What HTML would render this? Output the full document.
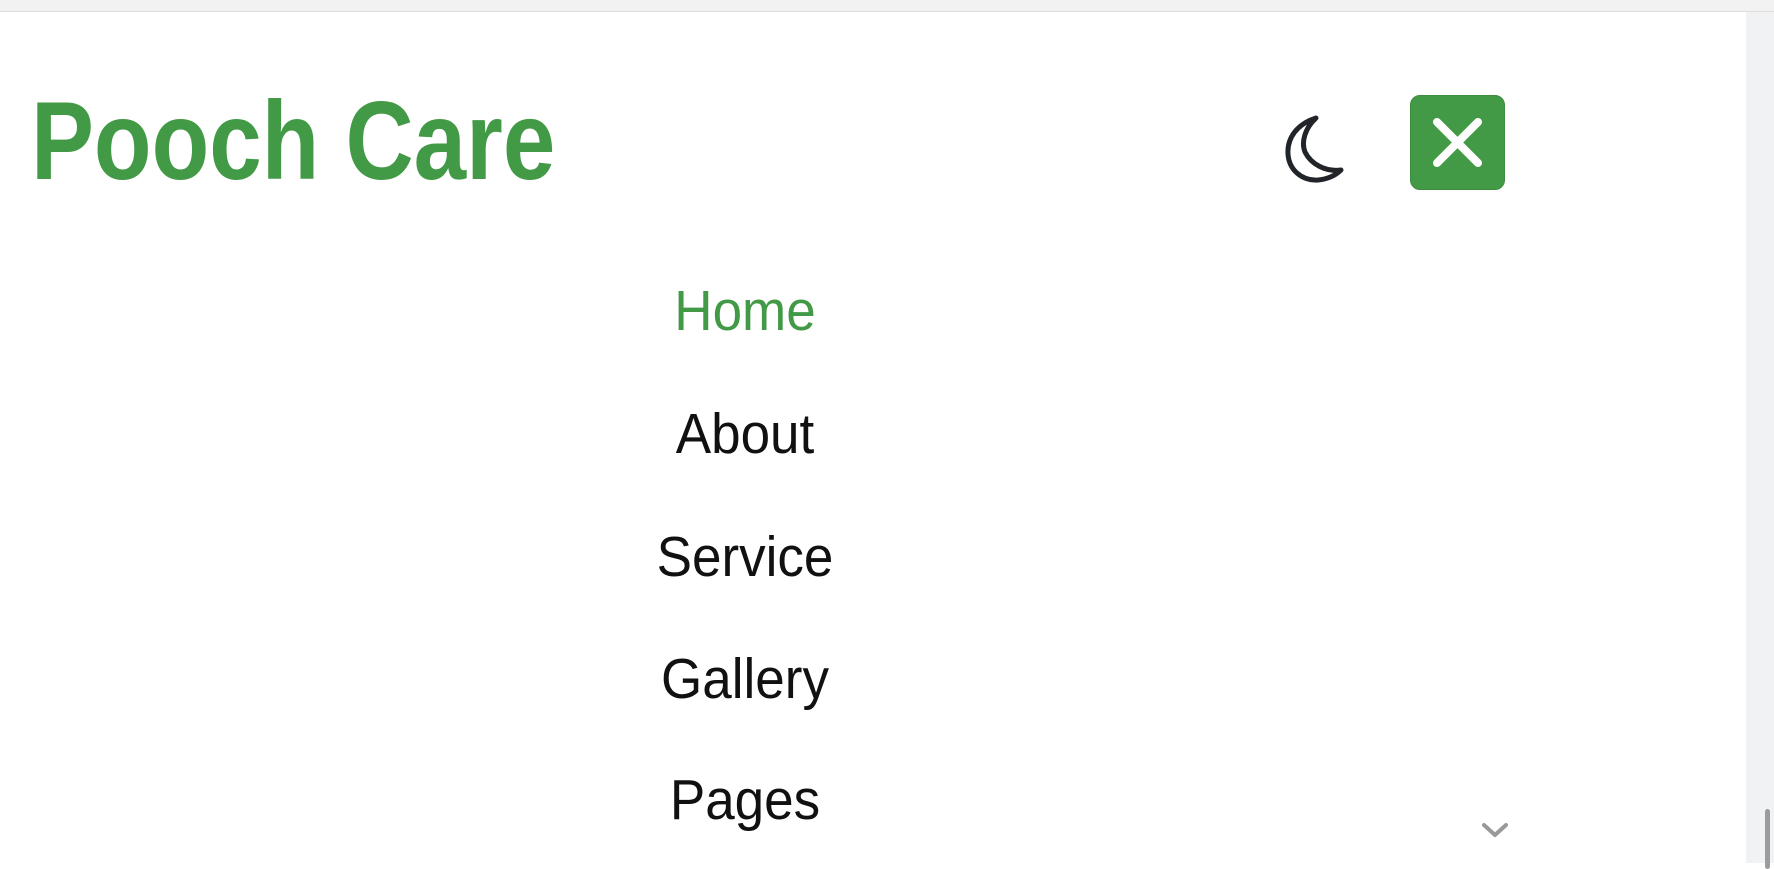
<!DOCTYPE html>
<html><head><meta charset="utf-8"><style>
html,body{margin:0;padding:0;width:1774px;height:863px;overflow:hidden;background:#fff;font-family:"Liberation Sans",sans-serif}
.top{position:absolute;left:0;top:0;width:1774px;height:11px;background:#f1f2f1;border-bottom:1px solid #dcdddc}
.logo{position:absolute;left:31px;top:0;height:180px;line-height:0;font-size:111px;font-weight:bold;color:#439a46;white-space:nowrap;transform:scaleX(.85);transform-origin:left}
.logo span{position:absolute;left:0;top:141px}
.item{position:absolute;left:545px;width:400px;text-align:center;font-size:57px;color:#111;line-height:0;transform:scaleX(.93)}
.sb{position:absolute;left:1746px;top:12px;width:28px;height:851px;background:#f1f2f4}
.thumb{position:absolute;left:1765px;top:809px;width:5px;height:60px;border-radius:3px;background:#9c9c9c}
.close{position:absolute;left:1410px;top:95px;width:93px;height:93px;border-radius:10px;background:#439a46;border:1px solid #3d8c40}
</style></head><body>
<div class="top"></div>
<div class="logo"><span>Pooch Care</span></div>
<svg style="position:absolute;left:1283px;top:114px" width="62" height="70" viewBox="0 0 62 70"><path d="M33 4 C14 10 4 24 5 40 C6 56 19 67 35 66 C45 65 53 61 58 56 C42 58 28 50 22 38 C18 28 22 14 33 4 Z" fill="none" stroke="#212529" stroke-width="5" stroke-linejoin="round"/></svg>
<div class="close"></div>
<svg style="position:absolute;left:1410px;top:95px" width="95" height="95"><path d="M27 27 L68 68 M68 27 L27 68" stroke="#fff" stroke-width="8" stroke-linecap="round"/></svg>
<div class="item" style="top:311px;color:#439a46">Home</div>
<div class="item" style="top:434px">About</div>
<div class="item" style="top:557px">Service</div>
<div class="item" style="top:679px">Gallery</div>
<div class="item" style="top:800px">Pages</div>
<svg style="position:absolute;left:1480px;top:820px" width="30" height="22"><path d="M4 5 L15 15 L26 5" stroke="#999" stroke-width="4" fill="none" stroke-linecap="round" stroke-linejoin="round"/></svg>
<div class="sb"></div><div class="thumb"></div>
</body></html>
